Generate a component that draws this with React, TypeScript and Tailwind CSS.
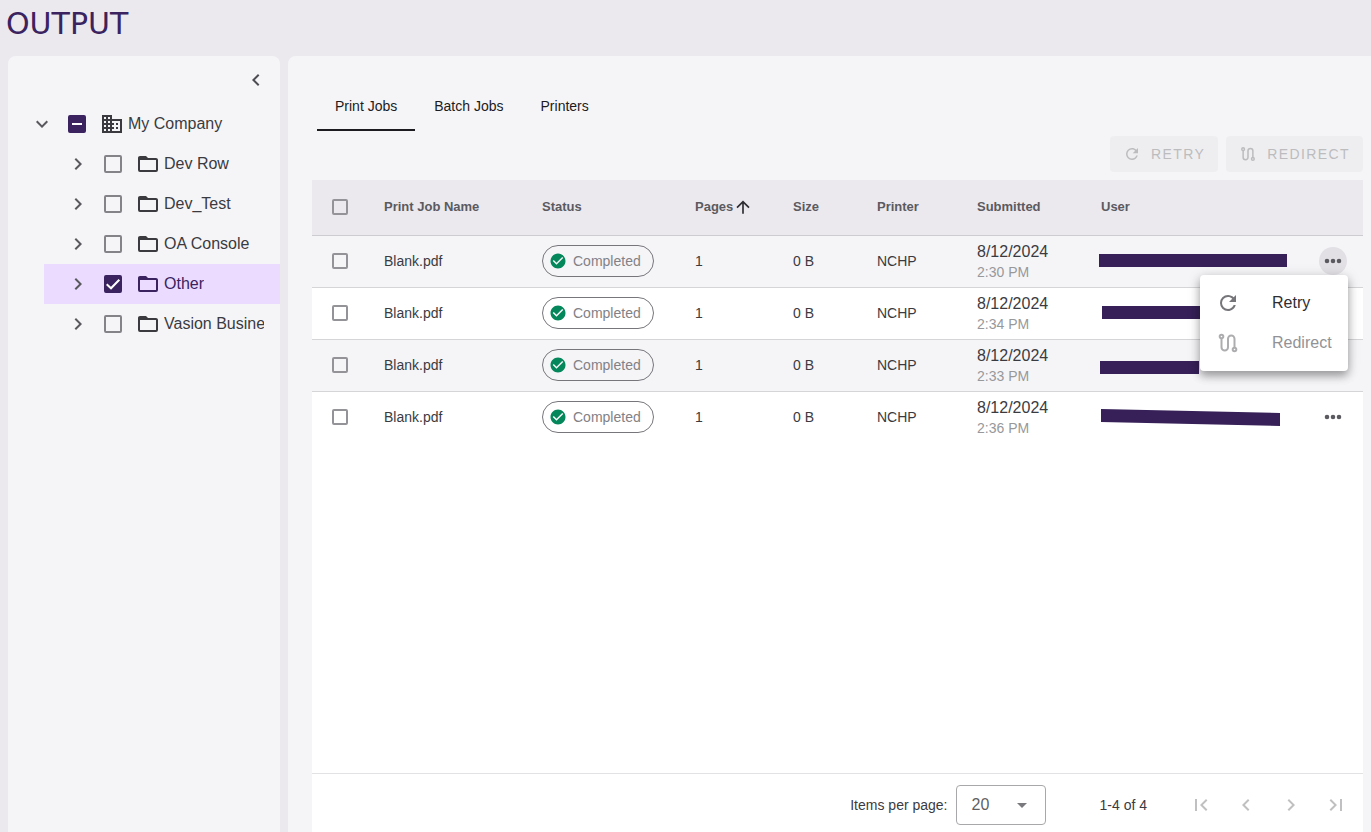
import type { ReactNode } from "react";

const ICONS = {
  down: "M7.41,8.58L12,13.17L16.59,8.58L18,10L12,16L6,10L7.41,8.58Z",
  right: "M8.59,16.58L13.17,12L8.59,7.41L10,6L16,12L10,18L8.59,16.58Z",
  left: "M15.41,16.58L10.83,12L15.41,7.41L14,6L8,12L14,18L15.41,16.58Z",
  first: "M18.41,16.59L13.82,12L18.41,7.41L17,6L11,12L17,18L18.41,16.59M6,6H8V18H6V6Z",
  last: "M5.59,7.41L10.18,12L5.59,16.59L7,18L13,12L7,6L5.59,7.41M16,6H18V18H16V6Z",
  domain:
    "M18,15H16V17H18M18,11H16V13H18M20,19H12V17H14V15H12V13H14V11H12V9H20M10,7H8V5H10M10,11H8V9H10M10,15H8V13H10M10,19H8V17H10M6,7H4V5H6M6,11H4V9H6M6,15H4V13H6M6,19H4V17H6M12,7V3H2V21H22V7H12Z",
  folder:
    "M20,18H4V8H20M20,6H12L10,4H4C2.89,4 2,4.89 2,6V18A2,2 0 0,0 4,20H20A2,2 0 0,0 22,18V8C22,6.89 21.1,6 20,6Z",
  refresh:
    "M17.65,6.35C16.2,4.9 14.21,4 12,4A8,8 0 0,0 4,12A8,8 0 0,0 12,20C15.73,20 18.84,17.45 19.73,14H17.65C16.83,16.33 14.61,18 12,18A6,6 0 0,1 6,12A6,6 0 0,1 12,6C13.66,6 15.14,6.69 16.22,7.78L13,11H20V4L17.65,6.35Z",
  dots: "M15.7,12A2.3,2.3 0 0,1 18,9.700A2.3,2.3 0 0,1 20.3,12A2.3,2.3 0 0,1 18,14.3A2.3,2.3 0 0,1 15.7,12M9.7,12A2.3,2.3 0 0,1 12,9.7A2.3,2.3 0 0,1 14.3,12A2.3,2.3 0 0,1 12,14.3A2.3,2.3 0 0,1 9.7,12M3.7,12A2.3,2.3 0 0,1 6,9.7A2.3,2.3 0 0,1 8.3,12A2.3,2.3 0 0,1 6,14.3A2.3,2.3 0 0,1 3.7,12Z",
  arrowUp: "M13,20H11V8L5.5,13.5L4.08,12.08L12,4.16L19.92,12.08L18.5,13.5L13,8V20Z",
  check:
    "M12 2C6.5 2 2 6.5 2 12S6.5 22 12 22 22 17.5 22 12 17.5 2 12 2M10 17L5 12L6.41 10.59L10 14.17L17.59 6.58L19 8L10 17Z",
  caret: "M7,10L12,15L17,10H7Z",
};

function Icon({ name, className = "size-6" }: { name: keyof typeof ICONS; className?: string }) {
  return (
    <svg viewBox="0 0 24 24" fill="currentColor" aria-hidden="true" className={`shrink-0 ${className}`}>
      <path d={ICONS[name]} />
    </svg>
  );
}

function RedirectIcon({ className = "size-6" }: { className?: string }) {
  return (
    <svg viewBox="0 0 24 24" fill="none" stroke="currentColor" strokeWidth="2" aria-hidden="true" className={`shrink-0 ${className}`}>
      <circle cx="5.5" cy="5.5" r="1.8" />
      <circle cx="18.5" cy="18.5" r="1.8" />
      <path d="M5.5 7.500v8.750a3.250 3.250 0 0 0 6.500 0v-8.500a3.250 3.250 0 0 1 6.500 0v8.750" />
    </svg>
  );
}

type CheckState = "off" | "on" | "mixed";

function Checkbox({ label, state = "off", id, small }: { label?: string; state?: CheckState; id?: string; small?: boolean }) {
  return (
    <span className="grid shrink-0 place-items-center">
      <input
        type="checkbox"
        id={id}
        aria-label={label}
        defaultChecked={state !== "off"}
        className={`col-start-1 row-start-1 appearance-none rounded-xs border-2 checked:border-[#3a235f] checked:bg-[#3a235f] ${small ? "size-4 border-[#949398]" : "size-[18px] border-[#848388]"}`}
      />
      {state !== "off" && (
        <svg viewBox="0 0 18 18" fill="none" stroke="white" strokeWidth="2" className="pointer-events-none col-start-1 row-start-1 size-[18px]">
          <path d={state === "on" ? "M2.700 9.300 7 13.300 15.300 4.700" : "M4 9h10"} />
        </svg>
      )}
    </span>
  );
}

const folders = ["Dev Row", "Dev_Test", "OA Console", "Other", "Vasion Business"];

function Sidebar() {
  return (
    <aside className="flex w-[272px] shrink-0 flex-col rounded-t-lg bg-[#f5f5f8] text-[#3b3b3f]">
      <div className="flex justify-end px-3 pt-3">
        <button type="button" aria-label="Collapse" className="text-[#4c4c52]">
          <Icon name="left" />
        </button>
      </div>
      <ul className="pt-3">
        <li>
          <div className="flex h-10 items-center pl-[22px]">
            <button type="button" aria-label="Collapse My Company" className="mr-[14px] text-[#58585d]">
              <Icon name="down" />
            </button>
            <Checkbox id="company" state="mixed" />
            <label htmlFor="company" className="ml-[14px] flex items-center gap-1">
              <Icon name="domain" />
              My Company
            </label>
          </div>
          <ul>
            {folders.map((name) => {
              const active = name === "Other";
              return (
                <li
                  key={name}
                  className={`ml-9 flex h-10 items-center pl-[22px] ${active ? "bg-[#ebdcff] text-[#3a235f]" : ""}`}
                >
                  <button type="button" aria-label={`Expand ${name}`} className="mr-[14px] text-[#58585d]">
                    <Icon name="right" />
                  </button>
                  <Checkbox id={name} state={active ? "on" : "off"} />
                  <label htmlFor={name} className="mr-4 ml-[14px] flex min-w-0 items-center gap-1">
                    <Icon name="folder" />
                    <span className="overflow-hidden whitespace-nowrap">{name}</span>
                  </label>
                </li>
              );
            })}
          </ul>
        </li>
      </ul>
    </aside>
  );
}

function ActionButton({ icon, children }: { icon: ReactNode; children: string }) {
  return (
    <button type="button" disabled className="flex h-9 items-center gap-2.5 rounded bg-[#eeeef0] px-[13px] text-sm tracking-widest text-[#bcbcbf]">
      {icon}
      {children}
    </button>
  );
}

function RowMenu() {
  return (
    <div className="absolute top-[39px] right-[15px] z-10 w-[148px] rounded bg-white py-2 text-base text-[#2e2e32] shadow-[0_5px_8px_rgba(0,0,0,0.3),0_2px_14px_rgba(0,0,0,0.15)]">
      <button type="button" className="flex h-10 w-full items-center gap-8 px-4">
        <Icon name="refresh" className="size-6 text-[#76767a]" />
        Retry
      </button>
      <button type="button" disabled className="flex h-10 w-full items-center gap-8 px-4 text-[#929296]">
        <RedirectIcon className="size-6 text-[#adadb0]" />
        Redirect
      </button>
    </div>
  );
}

const jobs = [
  { time: "2:30 PM", bar: "0,6 188,6 188,19 0,19" },
  { time: "2:34 PM", bar: "3,6 101,6 101,19 3,19" },
  { time: "2:33 PM", bar: "1,9 100,9 100,22 1,22" },
  { time: "2:36 PM", bar: "2,5 181,9 181,22 2,18" },
];

function JobsTable() {
  return (
    <table className="w-full table-fixed text-left text-sm text-[#3b3b3f]">
      <colgroup>
        <col className="w-14" />
        <col className="w-[158px]" />
        <col className="w-[153px]" />
        <col className="w-[98px]" />
        <col className="w-[84px]" />
        <col className="w-[100px]" />
        <col className="w-[124px]" />
        <col />
        <col className="w-[60px]" />
      </colgroup>
      <thead>
        <tr className="h-[55px] border-b border-[#cdccd0] bg-[#ece9ee] text-[13px] text-[#5b5a60]">
          <th>
            <Checkbox small label="Select all" />
          </th>
          <th className="px-4">Print Job Name</th>
          <th className="px-4">Status</th>
          <th className="pl-4">
            <span className="flex items-center">
              Pages
              <Icon name="arrowUp" className="size-5 text-[#2e2e32]" />
            </span>
          </th>
          <th className="px-4">Size</th>
          <th className="px-4">Printer</th>
          <th className="px-4">Submitted</th>
          <th className="px-4">User</th>
          <th />
        </tr>
      </thead>
      <tbody>
        {jobs.map((job, i) => (
          <tr key={job.time} className="h-[52px] border-b border-[#d5d5d8] last:border-0 odd:bg-[#f5f5f8]">
            <td>
              <Checkbox small label={`Select job ${i + 1}`} />
            </td>
            <td className="px-4">Blank.pdf</td>
            <td className="px-4">
              <span className="inline-flex h-8 items-center gap-1.5 rounded-full border border-[#77767b] pr-3 pl-1.5 align-middle text-[#828186]">
                <Icon name="check" className="size-[18px] text-[#04875a]" />
                Completed
              </span>
            </td>
            <td className="px-4">1</td>
            <td className="px-4">0 B</td>
            <td className="px-4">NCHP</td>
            <td className="pt-0.5 pl-4">
              <div className="text-base leading-5">8/12/2024</div>
              <div className="leading-5 text-[#98989b]">{job.time}</div>
            </td>
            <td className="pl-[14px]">
              <svg width="188" height="26" aria-hidden="true">
                <polygon points={job.bar} fill="#362057" />
              </svg>
            </td>
            <td className="relative">
              <button
                type="button"
                aria-label="Job actions"
                className={`mx-auto grid size-7 place-items-center rounded-full text-[#5b5a60] ${i === 0 ? "bg-[#e2e0e5]" : ""}`}
              >
                <Icon name="dots" className="size-6" />
              </button>
              {i === 0 && <RowMenu />}
            </td>
          </tr>
        ))}
      </tbody>
    </table>
  );
}

function Pagination() {
  return (
    <footer className="flex h-[59px] items-center justify-end border-t border-[#e2e2e4] pt-1 pr-[15px] text-sm text-[#3b3b3f]">
      <label htmlFor="page-size">Items per page:</label>
      <span className="ml-2 grid items-center">
        <select
          id="page-size"
          className="col-start-1 row-start-1 h-10 w-[90px] appearance-none rounded border border-[#a8a8ab] pl-[15px] text-base text-[#5f5f63]"
        >
          <option>20</option>
        </select>
        <Icon name="caret" className="pointer-events-none col-start-1 row-start-1 mr-3 size-6 justify-self-end text-[#7a7a7e]" />
      </span>
      <span className="mr-[42px] ml-[54px]">1-4 of 4</span>
      <div className="flex gap-[21px] text-[#c0c0c2]">
        <button type="button" disabled aria-label="First page"><Icon name="first" /></button>
        <button type="button" disabled aria-label="Previous page"><Icon name="left" /></button>
        <button type="button" disabled aria-label="Next page"><Icon name="right" /></button>
        <button type="button" disabled aria-label="Last page"><Icon name="last" /></button>
      </div>
    </footer>
  );
}

export default function App() {
  return (
    <div className="flex min-h-screen flex-col bg-[#ece9ee] font-['Liberation_Sans',sans-serif]">
      <header className="flex h-14 items-center px-1.5 pb-2">
        <h1 className="font-['DejaVu_Sans',sans-serif] text-3xl text-[#3a235f]">OUTPUT</h1>
      </header>
      <div className="flex flex-1 gap-2 pl-2">
        <Sidebar />
        <main className="flex min-w-0 flex-1 flex-col rounded-tl-lg bg-[#f5f5f8] pt-[26px] pr-2 pl-6">
          <nav className="flex gap-px pl-[5px] text-sm text-[#1c1b20]">
            <button type="button" className="h-[49px] border-b-2 border-[#1c1b20] px-[18px]">Print Jobs</button>
            <button type="button" className="h-[49px] border-b-2 border-transparent px-[18px]">Batch Jobs</button>
            <button type="button" className="h-[49px] border-b-2 border-transparent px-[18px]">Printers</button>
          </nav>
          <div className="flex justify-end gap-2 pt-[5px] pb-2">
            <ActionButton icon={<Icon name="refresh" className="size-[18px]" />}>RETRY</ActionButton>
            <ActionButton icon={<RedirectIcon className="size-[18px]" />}>REDIRECT</ActionButton>
          </div>
          <section className="flex flex-1 flex-col justify-between bg-white">
            <JobsTable />
            <Pagination />
          </section>
        </main>
      </div>
    </div>
  );
}
